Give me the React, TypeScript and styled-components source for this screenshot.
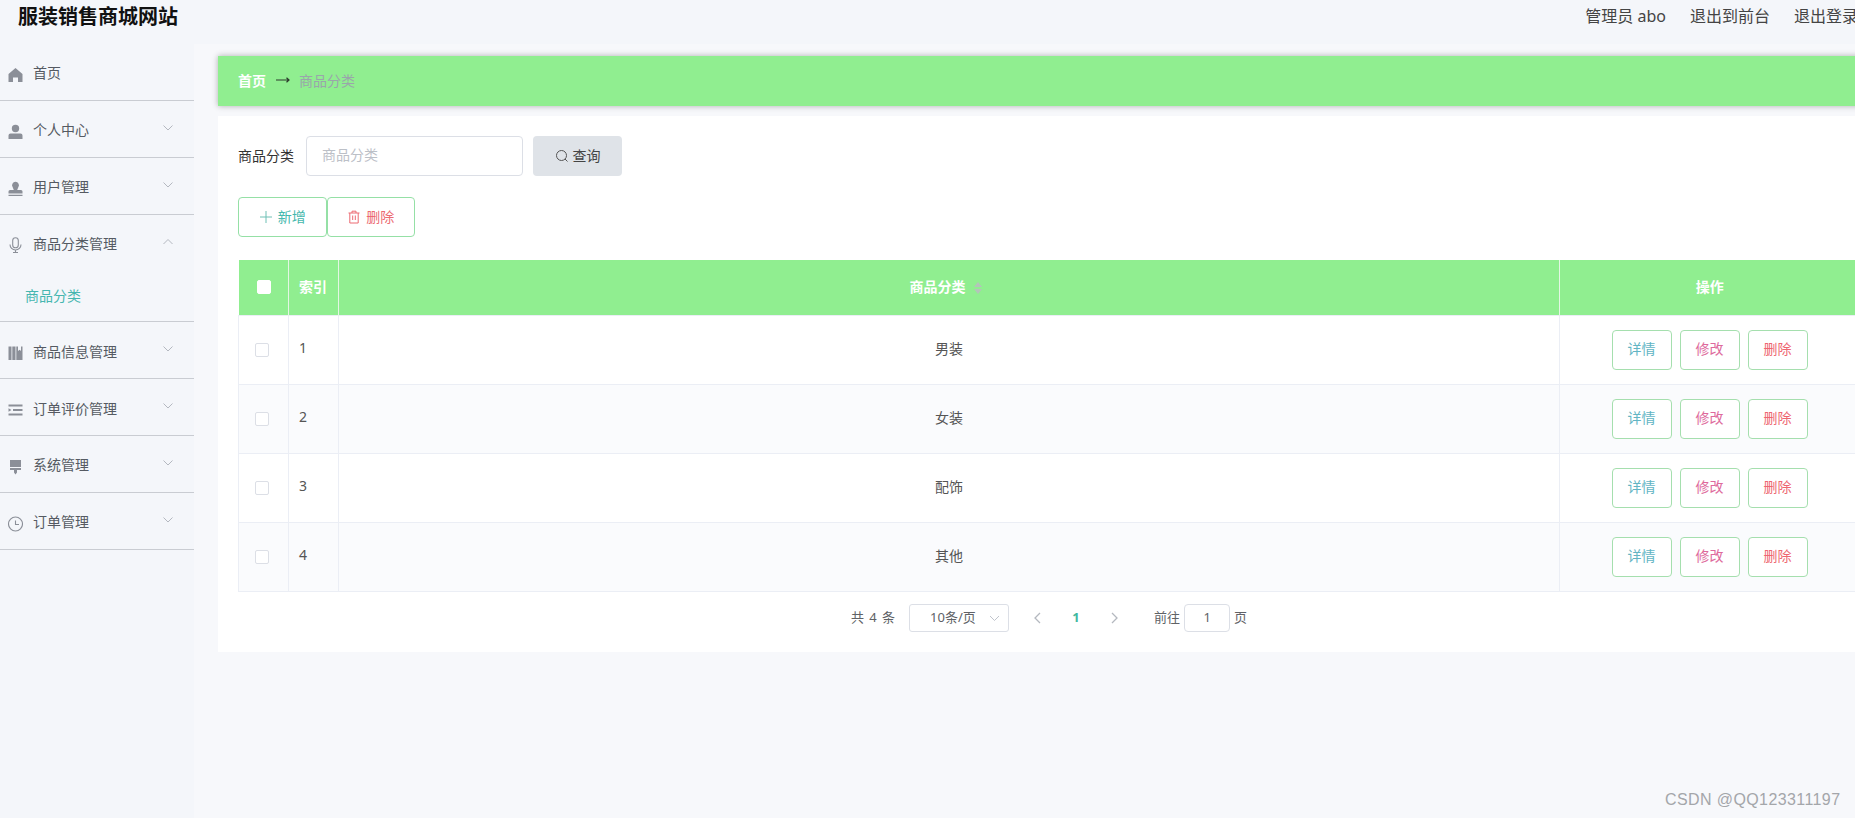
import React from "react";
import styled, { createGlobalStyle } from "styled-components";

const Global = createGlobalStyle`
  html, body { margin: 0; padding: 0; overflow: hidden; }
  body { font-family: "Noto Sans", "Noto Sans CJK SC", sans-serif; }
  * { box-sizing: border-box; }
`;
const Page = styled.div`
  position: relative;
  width: 1855px;
  height: 818px;
  overflow: hidden;
  background: #f7f8fb;
  color: #303133;
`;
const Header = styled.header`
  height: 44px;
  background: #f4f6fa;
  display: flex;
  align-items: flex-start;
  white-space: nowrap;
`;
const Title = styled.h1`
  margin: 4px 0 0 18px;
  font-size: 20px;
  line-height: 26px;
  font-weight: 700;
  color: #111;
`;
const TopLinks = styled.nav`
  margin-left: auto;
  margin-right: -3px;
  padding-top: 5px;
  display: flex;
  gap: 24px;
  font-size: 16px;
  line-height: 22px;
  color: #444;
`;
const Body = styled.div`
  display: flex;
  align-items: flex-start;
`;
const Sidebar = styled.aside`
  flex: 0 0 194px;
  height: 774px;
  background: #f4f6fa;
`;
const MenuGroup = styled.div`
  border-bottom: 1px solid #c9ccd2;
`;
const MenuHead = styled.div`
  position: relative;
  height: 55.85px;
  display: flex;
  align-items: center;
  padding: 1px 0 0 8px;
  font-size: 14px;
  color: #555a62;
`;
const IconBox = styled.span`
  flex: 0 0 15px;
  width: 15px;
  height: 16px;
  margin: 5px 10px 0 0;
  display: flex;
  color: #8b8f98;
  svg { flex: none; width: 15px; height: 16px; display: block; }
`;
const Chevron = styled.svg`
  position: absolute;
  left: 162px;
  top: 23px;
  width: 12px;
  height: 8px;
`;
const SubItem = styled.div`
  height: 51px;
  padding: 14px 0 0 25px;
  font-size: 14px;
  line-height: 24px;
  color: #46b6b0;
`;
const Main = styled.main`
  flex: 0 0 1686px;
  padding: 12px 0 0 24px;
`;
const Crumb = styled.div`
  height: 50px;
  background: #90ee90;
  box-shadow: 0 0 6px rgba(0, 0, 0, 0.3);
  display: flex;
  align-items: center;
  padding: 0 0 3px 20px;
  font-size: 14px;
`;
const CrumbHome = styled.span`
  color: #fff;
  font-weight: 700;
`;
const CrumbArrow = styled.svg`
  width: 14px;
  height: 8px;
  margin: 0 9px 0 10px;
`;
const CrumbCurrent = styled.span`
  color: #9aa5ab;
`;
const Panel = styled.section`
  margin-top: 10px;
  width: 1663px;
  height: 536px;
  background: #fff;
  padding: 20px 20px 0;
`;
const SearchRow = styled.div`
  display: flex;
  align-items: center;
  height: 40px;
  font-size: 14px;
`;
const SearchLabel = styled.label`
  width: 68px;
  color: #333;
  padding-bottom: 2px;
`;
const SearchInput = styled.div`
  width: 217px;
  height: 40px;
  border: 1px solid #dcdfe6;
  border-radius: 4px;
  padding: 0 15px;
  line-height: 36px;
  color: #bcc0c7;
  background: #fff;
`;
const SearchButton = styled.button`
  margin-left: 10px;
  width: 89px;
  height: 40px;
  border: 0;
  border-radius: 4px;
  background: #dfe3e8;
  color: #444;
  font: inherit;
  font-size: 14px;
  display: flex;
  align-items: center;
  justify-content: center;
  gap: 4px;
  padding: 0 0 2px;
  svg { width: 14px; height: 14px; margin-top: 2px; }
`;
const ActionRow = styled.div`
  display: flex;
  margin-top: 21px;
`;
const ActionButton = styled.button<{ $color: string }>`
  width: 88.5px;
  height: 40px;
  border: 1px solid #95e0a6;
  border-radius: 4px;
  background: #fff;
  color: ${(p) => p.$color};
  font: inherit;
  font-size: 14px;
  display: flex;
  align-items: center;
  justify-content: center;
  gap: 5px;
  padding: 0 0 2px;
  svg { width: 14px; height: 14px; margin-top: 2px; }
`;
const Table = styled.table`
  margin-top: 23px;
  width: 1622px;
  table-layout: fixed;
  border-collapse: collapse;
  font-size: 14px;
  color: #555;
`;
const HeadCell = styled.th<{ $align?: string }>`
  height: 55px;
  padding: 0 0 3px;
  background: #90ee90;
  color: #fff;
  font-weight: 700;
  font-size: 14px;
  text-align: ${(p) => p.$align || "center"};
  border-left: 1px solid #e4f6e4;
  &:first-child { border-left: 0; }
`;
const IndexHead = styled(HeadCell)`
  padding-left: 10px;
`;
const Row = styled.tr<{ $alt: boolean }>`
  background: ${(p) => (p.$alt ? "#fafbfd" : "#fff")};
`;
const Cell = styled.td<{ $align?: string }>`
  height: 69px;
  padding: 0;
  text-align: ${(p) => p.$align || "center"};
  border: 1px solid #ebeef5;
  font-size: 14px;
  color: #555;
`;
const CellText = styled.span`
  display: block;
  padding-bottom: 4px;
`;
const IndexCell = styled(Cell)`
  padding-left: 10px;
`;
const Check = styled.span<{ $head?: boolean }>`
  display: inline-block;
  vertical-align: middle;
  width: 14px;
  height: 14px;
  border-radius: 2px;
  background: #fff;
  border: 1px solid ${(p) => (p.$head ? "#fff" : "#dcdfe6")};
  margin: ${(p) => (p.$head ? "0 0 0 1px" : "0 3px 2px 0")};
`;
const Sort = styled.svg`
  display: inline-block;
  vertical-align: middle;
  width: 10px;
  height: 14px;
  margin: 0 6px 0 7px;
`;
const RowButtons = styled.div`
  display: flex;
  justify-content: center;
  gap: 8px;
`;
const RowButton = styled.button<{ $color: string }>`
  width: 60px;
  height: 40px;
  border: 1px solid #a5dfae;
  border-radius: 4px;
  background: #fff;
  color: ${(p) => p.$color};
  font: inherit;
  font-size: 14px;
  padding: 0 0 3px;
`;
const Pager = styled.div`
  width: 1622px;
  height: 52px;
  display: flex;
  align-items: center;
  justify-content: center;
  font-size: 13px;
  color: #606266;
`;
const PagerText = styled.span`
  padding-bottom: 2px;
`;
const PagerTotal = styled(PagerText)`
  margin-right: 14px;
  word-spacing: 2px;
`;
const PagerSelect = styled.div`
  position: relative;
  width: 100px;
  height: 28px;
  border: 1px solid #dcdfe6;
  border-radius: 3px;
  line-height: 24px;
  padding-left: 20px;
  svg { position: absolute; right: 8px; top: 10px; width: 11px; height: 7px; }
`;
const PagerNav = styled.div`
  display: flex;
  align-items: center;
  margin: 0 31px 0 20px;
  svg { width: 18px; height: 12px; }
`;
const PagerCurrent = styled(PagerText)`
  width: 58px;
  text-align: center;
  font-weight: 700;
  color: #3fb8a0;
`;
const PagerInput = styled.div`
  width: 46px;
  height: 28px;
  margin: 0 4px;
  border: 1px solid #dcdfe6;
  border-radius: 4px;
  text-align: center;
  line-height: 24px;
`;
const Watermark = styled.div`
  position: absolute;
  left: 1665px;
  top: 791px;
  font-family: "Liberation Sans", sans-serif;
  font-size: 16px;
  letter-spacing: 0.4px;
  line-height: 18px;
  color: #a4a6aa;
  white-space: nowrap;
`;

const P = ({ d }: { d: string }) => (
  <svg viewBox="0 0 15 16" fill="currentColor"><path d={d} /></svg>
);
const icons = {
  home: <P d="M7.5 1 14.500 7V15H10V10.500H5V15H.5V7Z" />,
  user: <P d="M7.5 .8A3.700 3.700 0 1 1 7.500 8.200 3.700 3.700 0 0 1 7.500 .8ZM2.500 9.400H12.500Q14.500 9.400 14.500 11.400V15H.5V11.400Q.5 9.400 2.500 9.400Z" />,
  custom: <P d="M7.500 .8A3.400 3.400 0 0 1 10.300 6.200L9.200 9H13Q14.500 9 14.500 10.500V12.500H.5V10.500Q.5 9 2 9H5.800L4.700 6.200A3.400 3.400 0 0 1 7.500 .8ZM.5 13.800H14.500V15H.5Z" />,
  mic: (
    <svg viewBox="0 0 15 16" fill="none" stroke="currentColor" strokeWidth="1.1">
      <rect x="4.700" y=".8" width="5.600" height="10" rx="2.800" />
      <path d="M2 7.500a5.500 5.500 0 0 0 11 0M7.500 13v2.500M5 15.500h5" />
    </svg>
  ),
  box: <P d="M.5 1.500H3.500V15H.5ZM4.300 1.500H7.500V15H4.300ZM8.300 1.500H10V6L11.700 4.800 13 6V1.500H14.500V15H8.300Z" />,
  list: <P d="M.5 2.500H14.500V4.500H.5ZM5 7H14.500V9H5ZM.5 6.300 3.500 8 .5 9.700ZM.5 11.500H14.500V13.500H.5Z" />,
  brush: <P d="M2 1H13V8H2ZM2 9H13V11H9V13.500L7.500 15.500 6 13.500V11H2Z" />,
  clock: (
    <svg viewBox="0 0 15 16" fill="none" stroke="currentColor" strokeWidth="1.1">
      <circle cx="7.500" cy="8" r="7" />
      <path d="M7.500 4.500V8.500H11" />
    </svg>
  ),
};

const menu: { label: string; icon: keyof typeof icons; arrow?: "down" | "up"; sub?: string }[] = [
  { label: "首页", icon: "home" },
  { label: "个人中心", icon: "user", arrow: "down" },
  { label: "用户管理", icon: "custom", arrow: "down" },
  { label: "商品分类管理", icon: "mic", arrow: "up", sub: "商品分类" },
  { label: "商品信息管理", icon: "box", arrow: "down" },
  { label: "订单评价管理", icon: "list", arrow: "down" },
  { label: "系统管理", icon: "brush", arrow: "down" },
  { label: "订单管理", icon: "clock", arrow: "down" },
];
const rows = ["男装", "女装", "配饰", "其他"];

export default function App() {
  return (
    <Page>
      <Global />
      <Header>
        <Title>服装销售商城网站</Title>
        <TopLinks>
          <span>管理员 abo</span>
          <span>退出到前台</span>
          <span>退出登录</span>
        </TopLinks>
      </Header>
      <Body>
        <Sidebar>
          {menu.map((m) => (
            <MenuGroup key={m.label}>
              <MenuHead>
                <IconBox>{icons[m.icon]}</IconBox>
                {m.label}
                {m.arrow && (
                  <Chevron viewBox="0 0 12 8" fill="none" stroke="#b4b8c0" strokeWidth="1">
                    <path d={m.arrow === "down" ? "M1.500 1.500 6 6l4.500-4.500" : "M1.500 6 6 1.500 10.500 6"} />
                  </Chevron>
                )}
              </MenuHead>
              {m.sub && <SubItem>{m.sub}</SubItem>}
            </MenuGroup>
          ))}
        </Sidebar>
        <Main>
          <Crumb>
            <CrumbHome>首页</CrumbHome>
            <CrumbArrow viewBox="0 0 14 8" fill="none" stroke="#2c3a2c" strokeWidth="1.200">
              <path d="M0 4H13M10.500 1.800 13 4 10.500 6.200" />
            </CrumbArrow>
            <CrumbCurrent>商品分类</CrumbCurrent>
          </Crumb>
          <Panel>
            <SearchRow>
              <SearchLabel>商品分类</SearchLabel>
              <SearchInput>商品分类</SearchInput>
              <SearchButton>
                <svg viewBox="0 0 14 14" fill="none" stroke="#555" strokeWidth="1">
                  <circle cx="6.500" cy="6.500" r="5" />
                  <path d="M10 10l2.500 2.500" />
                </svg>
                查询
              </SearchButton>
            </SearchRow>
            <ActionRow>
              <ActionButton $color="#45b8ad">
                <svg viewBox="0 0 14 14" fill="none" stroke="#6fc0b5" strokeWidth="1">
                  <path d="M7 1V13M1 7H13" />
                </svg>
                新增
              </ActionButton>
              <ActionButton $color="#ec6a72">
                <svg viewBox="0 0 14 14" fill="none" stroke="#ec6a72" strokeWidth="1">
                  <path d="M1.500 3H12.500M5 3V1.200H9V3M2.800 3V13H11.200V3M5.700 5.500V10M8.300 5.500V10" />
                </svg>
                删除
              </ActionButton>
            </ActionRow>
            <Table>
              <colgroup>
                <col width="50" />
                <col width="50" />
                <col />
                <col width="300" />
              </colgroup>
              <thead>
                <tr>
                  <HeadCell><Check $head /></HeadCell>
                  <IndexHead $align="left">索引</IndexHead>
                  <HeadCell>
                    商品分类
                    <Sort viewBox="0 0 10 14" fill="#b4c4ba">
                      <path d="M5 1 9 6H1ZM5 13 1 8H9Z" />
                    </Sort>
                  </HeadCell>
                  <HeadCell>操作</HeadCell>
                </tr>
              </thead>
              <tbody>
                {rows.map((name, i) => (
                  <Row key={name} $alt={i % 2 === 1}>
                    <Cell><Check /></Cell>
                    <IndexCell $align="left"><CellText>{i + 1}</CellText></IndexCell>
                    <Cell><CellText>{name}</CellText></Cell>
                    <Cell>
                      <RowButtons>
                        <RowButton $color="#62b5c4">详情</RowButton>
                        <RowButton $color="#de6a9c">修改</RowButton>
                        <RowButton $color="#ee6670">删除</RowButton>
                      </RowButtons>
                    </Cell>
                  </Row>
                ))}
              </tbody>
            </Table>
            <Pager>
              <PagerTotal>共 4 条</PagerTotal>
              <PagerSelect>
                10条/页
                <svg viewBox="0 0 11 7" fill="none" stroke="#c0c4cc" strokeWidth="1">
                  <path d="M1 1l4.500 4.500L10 1" />
                </svg>
              </PagerSelect>
              <PagerNav>
                <svg viewBox="0 0 18 12" fill="none" stroke="#b4b8bf" strokeWidth="1.300">
                  <path d="M11 1 6 6l5 5" />
                </svg>
                <PagerCurrent>1</PagerCurrent>
                <svg viewBox="0 0 18 12" fill="none" stroke="#b4b8bf" strokeWidth="1.300">
                  <path d="M7 1l5 5-5 5" />
                </svg>
              </PagerNav>
              <PagerText>前往</PagerText>
              <PagerInput>1</PagerInput>
              <PagerText>页</PagerText>
            </Pager>
          </Panel>
        </Main>
      </Body>
      <Watermark>CSDN @QQ123311197</Watermark>
    </Page>
  );
}
